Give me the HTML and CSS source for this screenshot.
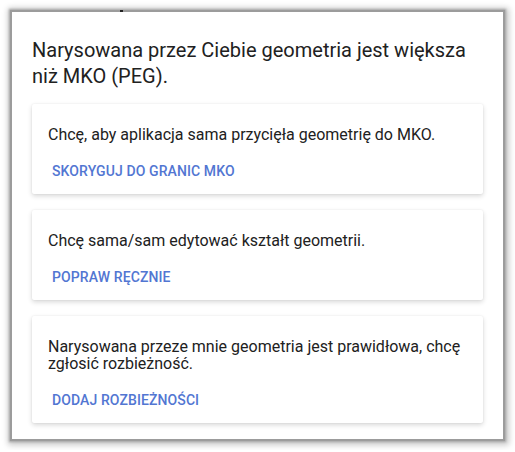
FILE: index.html
```html
<!DOCTYPE html>
<html lang="pl">
<head>
<meta charset="utf-8">
<title>Geometria</title>
<link rel="stylesheet" href="styles.css">
</head>
<body>
<div class="dialog">
  <h1 class="title">Narysowana przez Ciebie geometria jest większa niż MKO (PEG).</h1>
  <div class="card">
    <p class="card-text">Chcę, aby aplikacja sama przycięła geometrię do MKO.</p>
    <div class="actions"><button class="btn">Skoryguj do granic MKO</button></div>
  </div>
  <div class="card">
    <p class="card-text">Chcę sama/sam edytować kształt geometrii.</p>
    <div class="actions"><button class="btn">Popraw ręcznie</button></div>
  </div>
  <div class="card">
    <p class="card-text">Narysowana przeze mnie geometria jest prawidłowa, chcę zgłosić rozbieżność.</p>
    <div class="actions"><button class="btn">Dodaj rozbieżności</button></div>
  </div>
</div>
</body>
</html>
```
FILE: styles.css
```css
html, body {
  margin: 0;
  padding: 0;
  background: #ffffff;
}
body {
  font-family: Roboto, "Liberation Sans", sans-serif;
  color: #212121;
  padding: 12px 12px 11px 12px;
}
.dialog {
  position: relative;
  width: 451px;
  background: #fff;
  padding: 25px 20px 16px 20px;
  box-shadow: 0 0 0 2px #9c9c9c, 0 0 2px 3px #a8a8a8, 1px 1px 6px 5px rgba(0,0,0,0.22);
}
.dialog::before {
  content: "";
  position: absolute;
  left: 108px;
  top: -2px;
  width: 3px;
  height: 2px;
  background: #222;
}
.title {
  margin: 0 0 15px 0;
  font-size: 20px;
  line-height: 26px;
  font-weight: 400;
  color: #212121;
}
.card {
  background: #fff;
  border-radius: 2px;
  box-shadow: 0 2px 5px rgba(0,0,0,0.16), 0 0 2px rgba(0,0,0,0.07);
  padding: 22px 16px 5px 16px;
  margin-bottom: 16px;
}
.card:last-child {
  margin-bottom: 0;
}
.card-text {
  margin: 0;
  font-size: 16px;
  line-height: 17px;
  color: #212121;
}
.actions {
  margin-top: 10px;
  display: flex;
}
.btn {
  font-family: Roboto, "Liberation Sans", sans-serif;
  font-size: 14px;
  font-weight: 500;
  text-transform: uppercase;
  letter-spacing: 0.1px;
  color: #5276d2;
  background: none;
  border: 0;
  padding: 0 4px;
  height: 36px;
  line-height: 36px;
  cursor: pointer;
}
```
